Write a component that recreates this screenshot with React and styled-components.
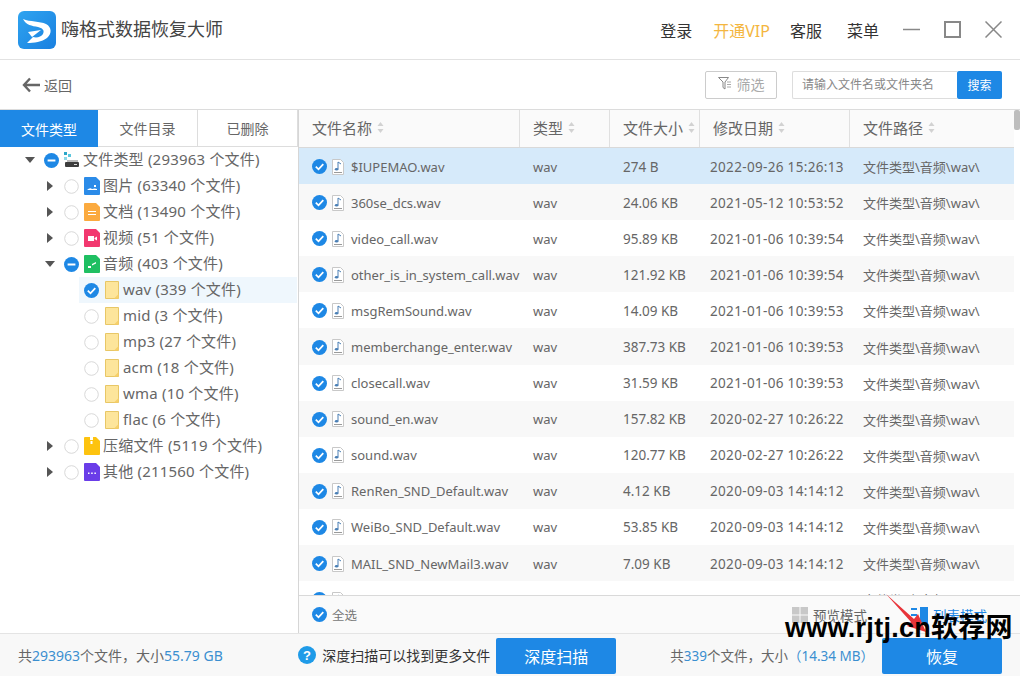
import React from 'react';
import styled, { createGlobalStyle } from 'styled-components';

const Global = createGlobalStyle`
  html, body { margin: 0; padding: 0; background: #fff; }
  * { box-sizing: border-box; }
  body { font-family: "Noto Sans", "Noto Sans CJK SC", sans-serif; color: #666; }
`;

const Page = styled.div`
  position: relative;
  width: 1020px;
  height: 676px;
  display: flex;
  flex-direction: column;
  overflow: hidden;
`;

const Header = styled.header`
  height: 60px;
  flex: none;
  display: flex;
  align-items: center;
  padding-left: 18px;
  border-bottom: 1px solid #e2e2e2;
`;

const Title = styled.h1`
  margin: 0 0 0 5px;
  padding-bottom: 4px;
  font-size: 18px;
  font-weight: 400;
  color: #444;
`;

const Nav = styled.nav`
  margin-left: auto;
  display: flex;
  align-items: center;
  font-size: 16px;
  color: #333;
`;

const NavItem = styled.a`
  margin-left: ${p => p.$gap}px;
  color: ${p => (p.$vip ? '#f4b63f' : '#333')};
  white-space: nowrap;
`;

const WinControls = styled.div`
  display: flex;
  align-items: center;
  gap: 24px;
  margin: 0 18px 0 24px;
`;

const Toolbar = styled.div`
  height: 50px;
  flex: none;
  display: flex;
  align-items: center;
  padding: 0 18px 0 22px;
  border-bottom: 1px solid #dcdcdc;
`;

const Back = styled.a`
  display: flex;
  align-items: center;
  gap: 4px;
  font-size: 14px;
  color: #666;
`;

const FilterButton = styled.button`
  margin-left: auto;
  width: 72px;
  height: 28px;
  padding: 0 0 2px;
  display: flex;
  align-items: center;
  justify-content: center;
  gap: 5px;
  background: #fff;
  border: 1px solid #ccc;
  border-radius: 2px;
  font: inherit;
  font-size: 14px;
  color: #aaa;
`;

const SearchBox = styled.div`
  margin-left: 15px;
  display: flex;
  height: 28px;
`;

const SearchInput = styled.input`
  width: 165px;
  height: 28px;
  padding: 0 9px;
  border: 1px solid #ddd;
  border-right: 0;
  border-radius: 2px 0 0 2px;
  outline: none;
  font: inherit;
  font-size: 12px;
  &::placeholder { color: #888; opacity: 1; }
`;

const SearchButton = styled.button`
  width: 45px;
  height: 28px;
  border: 0;
  border-radius: 2px;
  background: #1e88e5;
  color: #fff;
  font: inherit;
  font-size: 12px;
  padding: 0;
`;

const Main = styled.div`
  flex: 1;
  min-height: 0;
  display: flex;
`;

const Side = styled.aside`
  width: 299px;
  flex: none;
  border-right: 1px solid #d6d6d6;
`;

const Tabs = styled.div`
  display: flex;
  height: 37px;
  width: 298px;
  border-bottom: 1px solid #ddd;
`;

const Tab = styled.div`
  flex: 0 0 ${p => p.$w}px;
  height: ${p => (p.$active ? 37 : 36)}px;
  display: flex;
  align-items: center;
  justify-content: center;
  font-size: 14px;
  color: ${p => (p.$active ? '#fff' : '#666')};
  background: ${p => (p.$active ? '#1e88e5' : '#fff')};
  border-right: ${p => (p.$active ? '0' : '1px solid #ddd')};
`;

const TreeRow = styled.div`
  height: 26px;
  display: flex;
  align-items: center;
  padding-left: ${p => [23, 43, 5][p.$depth]}px;
  margin-left: ${p => (p.$depth === 2 ? 79 : 0)}px;
  width: ${p => (p.$depth === 2 ? '218px' : 'auto')};
  font-size: 15px;
  letter-spacing: 0.2px;
  color: #666;
  white-space: nowrap;
  background: ${p => (p.$selected ? '#eff7fd' : 'transparent')};
`;

const Arrow = styled.span`
  width: 14px;
  height: 14px;
  flex: none;
  margin-right: 7px;
  display: flex;
  align-items: center;
  justify-content: center;
`;

const IconSlot = styled.span`
  display: flex;
  flex: none;
  margin-left: ${p => (p.$depth === 2 ? 6 : 5)}px;
`;

const TreeLabel = styled.span`
  margin-left: ${p => (p.$depth === 1 ? 3 : 4)}px;
  padding-bottom: 4px;
`;

const Content = styled.section`
  flex: 1;
  min-width: 0;
  display: flex;
  flex-direction: column;
`;

const TableWrap = styled.div`
  flex: 1;
  min-height: 0;
  display: flex;
  overflow: hidden;
`;

const Table = styled.div`
  width: 715px;
  flex: none;
`;

const Scrollbar = styled.div`
  flex: 1;
  background: #fff;
`;

const Thumb = styled.div`
  width: 6px;
  height: 20px;
  margin-left: auto;
  background: #bdbdbd;
  border-radius: 2px;
`;

const columns = '221px 90px 90px 150px 164px';

const HeadRow = styled.div`
  display: grid;
  grid-template-columns: ${columns};
  height: 38px;
  background: #fafafa;
  border-bottom: 1px solid #d9d9d9;
`;

const HeadCell = styled.div`
  display: flex;
  align-items: center;
  gap: 5px;
  padding: 0 0 2px 13px;
  font-size: 15px;
  color: #666;
  border-right: ${p => (p.$last ? '0' : '1px solid #e0e0e0')};
`;

const Row = styled.div`
  display: grid;
  grid-template-columns: ${columns};
  height: 36.1px;
  background: ${p => (p.$selected ? '#d6eafa' : p.$odd ? '#f8f8f8' : '#fff')};
`;

const Cell = styled.div`
  display: flex;
  align-items: center;
  padding: 1px 0 0 13px;
  font-size: 13px;
  color: #666;
  white-space: nowrap;
`;

const NameCell = styled(Cell)`
  gap: 4px;
  svg { flex: none; }
`;

const FileName = styled.span`
  margin-left: 2px;
`;

const SizeCell = styled(Cell)`
  font-size: 13.5px;
`;

const DateCell = styled(Cell)`
  padding-left: 10px;
  font-size: 13.5px;
  letter-spacing: 0.33px;
`;

const ListBar = styled.div`
  height: 38px;
  flex: none;
  display: flex;
  align-items: center;
  padding: 0 33px 0 13px;
  border-top: 1px solid #d9d9d9;
  background: #fafafa;
  font-size: 12.5px;
`;

const SelectAll = styled.label`
  display: flex;
  align-items: center;
  gap: 5px;
  color: #777;
`;

const Mode = styled.a`
  display: flex;
  align-items: center;
  gap: 5px;
  font-size: 13.5px;
  color: ${p => (p.$active ? '#1e88e5' : '#666')};
  margin-left: ${p => (p.$first ? 'auto' : '44px')};
`;

const BottomBar = styled.footer`
  height: 43px;
  flex: none;
  display: flex;
  align-items: center;
  padding: 0 18px;
  background: #f8f8f8;
  border-top: 1px solid #e4e4e4;
  font-size: 14px;
  color: #666;
`;

const Num = styled.span`
  color: #3b8fd0;
`;

const Help = styled.div`
  margin-left: auto;
  display: flex;
  align-items: center;
  gap: 6px;
  color: #333;
  font-size: 14px;
`;

const BigButton = styled.button`
  width: 120px;
  height: 36px;
  margin: 2px 0 0 ${p => p.$gap}px;
  border: 0;
  border-radius: 2px;
  background: #1e88e5;
  color: #fff;
  font: inherit;
  font-size: 16px;
`;

const Summary = styled.div`
  margin-left: 54px;
  font-size: 13.5px;
  white-space: nowrap;
`;

const Watermark = styled.div`
  position: absolute;
  left: 785px;
  top: 610px;
  font-family: "Liberation Sans", "Noto Sans CJK SC", sans-serif;
  font-weight: 700;
  font-size: 27px;
  letter-spacing: 0.27px;
  line-height: 36px;
  color: #000;
  white-space: nowrap;
`;

const RedArrow = styled.svg`
  position: absolute;
  left: 884px;
  top: 592px;
`;

const Logo = () => (
  <svg width="38" height="38" viewBox="0 0 38 38">
    <defs>
      <linearGradient id="lg" x1="0" y1="0" x2="1" y2="1">
        <stop offset="0" stopColor="#2fa4f0" />
        <stop offset="1" stopColor="#1a80e0" />
      </linearGradient>
    </defs>
    <rect width="38" height="38" rx="6" fill="url(#lg)" />
    <path d="M5 8 C12 11 22 10 28 13 C34 16 34 23 29 27 C24 31 16 32 9 32 L15 26 C19 27 23 26 25 23 C27 19 24 17 20 16 C14 15 8 14 5 8 Z" fill="#fff" />
    <path d="M10 21 L23 19 L14 26 Z" fill="#fff" />
  </svg>
);

const CheckIcon = ({ state }) => {
  if (state === 'off') {
    return (
      <svg width="15" height="15" viewBox="0 0 15 15">
        <circle cx="7.5" cy="7.5" r="6.8" fill="#fff" stroke="#d8d8d8" />
      </svg>
    );
  }
  return (
    <svg width="15" height="15" viewBox="0 0 15 15">
      <circle cx="7.5" cy="7.5" r="7.5" fill="#1e88e5" />
      {state === 'on'
        ? <path d="M3.8 7.7 L6.5 10.3 L11.3 5.2" fill="none" stroke="#fff" strokeWidth="1.8" />
        : <rect x="3.6" y="6.5" width="7.8" height="2" fill="#fff" />}
    </svg>
  );
};

const TreeArrow = ({ open }) => (
  <svg width="12" height="12" viewBox="0 0 12 12">
    {open ? <path d="M1 3 H11 L6 9 Z" fill="#555" /> : <path d="M3 1 L9 6 L3 11 Z" fill="#555" />}
  </svg>
);

const DocIcon = ({ color, children }) => (
  <svg width="16" height="18" viewBox="0 0 16 18">
    <path d="M0 1 Q0 0 1 0 H12 L16 4 V17 Q16 18 15 18 H1 Q0 18 0 17 Z" fill={color} />
    {children}
  </svg>
);

const icons = {
  image: <DocIcon color="#2b8be8"><path d="M3 13 Q6 10 8 12 Q11 11 13 12 V13 Z M10 8 H12 V10 H10 Z" fill="#fff" /></DocIcon>,
  doc: <DocIcon color="#fbaa3f"><path d="M4 8 H12 V9 H4 Z M4 11 H12 V12 H4 Z" fill="#fff" /></DocIcon>,
  video: <DocIcon color="#f2386f"><path d="M4 7 H10 V12 H4 Z M10.5 9 L13 7.5 V11.5 L10.5 10 Z" fill="#fff" /></DocIcon>,
  audio: <DocIcon color="#1fbf62"><path d="M4 13 H7 V11 H4 Z M8 9 L12 7 V8.5 L8 10.5 Z" fill="#fff" /></DocIcon>,
  zip: <DocIcon color="#fdc30f"><path d="M6 0 H9 V3 H6 Z M6.5 4 H8.5 V7 H6.5 Z" fill="#fff" /></DocIcon>,
  other: <DocIcon color="#6a3de8"><path d="M4 9.5 H5.5 V11 H4 Z M7.2 9.5 H8.7 V11 H7.2 Z M10.4 9.5 H11.9 V11 H10.4 Z" fill="#fff" /></DocIcon>,
};

const DriveIcon = () => (
  <svg width="15" height="16" viewBox="0 0 15 16">
    <rect x="0" y="0" width="3" height="3" fill="#2aa7c9" />
    <rect x="4" y="2" width="3" height="3" fill="#5cc6dd" />
    <rect x="0" y="5" width="3" height="3" fill="#8ed8e8" />
    <rect x="3" y="8" width="11" height="2" fill="#bbb" />
    <rect x="1" y="10" width="14" height="5" rx="1" fill="#3d3d3d" />
    <rect x="10" y="12" width="3" height="1" fill="#ddd" />
  </svg>
);

const FolderIcon = () => (
  <svg width="14" height="18" viewBox="0 0 14 18">
    <path d="M.5 .5 H13.5 V17.5 H.5 Z" fill="#fde59b" stroke="#e8c766" />
    <path d="M9 17.5 L13.5 13 V17.5 Z" fill="#f7d06a" />
  </svg>
);

const AudioFile = () => (
  <svg width="14" height="16" viewBox="0 0 14 16">
    <path d="M1.5 .5 H9.5 L12.5 3.5 V15.5 H1.5 Z" fill="#fff" stroke="#c8c8c8" />
    <path d="M7 3 V10 M7 3 L10 5" fill="none" stroke="#4a7fb5" strokeWidth="1" />
    <ellipse cx="5.6" cy="10.2" rx="1.8" ry="1.3" fill="#4a7fb5" />
    <rect x="3" y="13" width="8" height="1" fill="#9a9a9a" />
  </svg>
);

const SortIcon = () => (
  <svg width="7" height="13" viewBox="0 0 7 13">
    <path d="M3.5 1 L6.5 5 H.5 Z M3.5 12 L6.5 8 H.5 Z" fill="#d2d2d2" />
  </svg>
);

const BackIcon = () => (
  <svg width="18" height="16" viewBox="0 0 18 16">
    <path d="M8 1.5 L2 8 L8 14.5 M2 8 H18" fill="none" stroke="#666" strokeWidth="2.4" />
  </svg>
);

const FilterIcon = () => (
  <svg width="14" height="13" viewBox="0 0 14 13">
    <path d="M.5 .5 H10.5 L7 5 V12 L5 10.5 V5 Z" fill="none" stroke="#888" />
    <path d="M9 5 H13 M9 7.5 H13 M9 10 H13" stroke="#aaa" />
  </svg>
);

const GridIcon = () => (
  <svg width="16" height="16" viewBox="0 0 16 16">
    <path d="M0 0 H7.5 V7.5 H0 Z M8.5 0 H16 V7.5 H8.5 Z M0 8.5 H7.5 V16 H0 Z M8.5 8.5 H16 V16 H8.5 Z" fill="#c8c8c8" />
  </svg>
);

const ListIcon = () => (
  <svg width="17" height="16" viewBox="0 0 17 16">
    <path d="M0 1 H6 V3 H0 Z M0 7 H6 V9 H0 Z M0 13 H6 V15 H0 Z" fill="#1e88e5" />
    <rect x="9" y="0" width="8" height="16" fill="#1e88e5" />
  </svg>
);

const HelpIcon = () => (
  <svg width="18" height="18" viewBox="0 0 18 18">
    <circle cx="9" cy="9" r="9" fill="#1f9be8" />
    <text x="9" y="13.5" textAnchor="middle" fontSize="13" fontWeight="700" fill="#fff" fontFamily="Liberation Sans">?</text>
  </svg>
);

const tree = [
  { depth: 0, arrow: 'open', check: 'part', icon: <DriveIcon />, label: '文件类型 (293963 个文件)' },
  { depth: 1, arrow: 'closed', check: 'off', icon: icons.image, label: '图片 (63340 个文件)' },
  { depth: 1, arrow: 'closed', check: 'off', icon: icons.doc, label: '文档 (13490 个文件)' },
  { depth: 1, arrow: 'closed', check: 'off', icon: icons.video, label: '视频 (51 个文件)' },
  { depth: 1, arrow: 'open', check: 'part', icon: icons.audio, label: '音频 (403 个文件)' },
  { depth: 2, check: 'on', icon: <FolderIcon />, selected: true, label: 'wav (339 个文件)' },
  { depth: 2, check: 'off', icon: <FolderIcon />, label: 'mid (3 个文件)' },
  { depth: 2, check: 'off', icon: <FolderIcon />, label: 'mp3 (27 个文件)' },
  { depth: 2, check: 'off', icon: <FolderIcon />, label: 'acm (18 个文件)' },
  { depth: 2, check: 'off', icon: <FolderIcon />, label: 'wma (10 个文件)' },
  { depth: 2, check: 'off', icon: <FolderIcon />, label: 'flac (6 个文件)' },
  { depth: 1, arrow: 'closed', check: 'off', icon: icons.zip, label: '压缩文件 (5119 个文件)' },
  { depth: 1, arrow: 'closed', check: 'off', icon: icons.other, label: '其他 (211560 个文件)' },
];

const files = [
  ['$IUPEMAO.wav', 'wav', '274 B', '2022-09-26 15:26:13'],
  ['360se_dcs.wav', 'wav', '24.06 KB', '2021-05-12 10:53:52'],
  ['video_call.wav', 'wav', '95.89 KB', '2021-01-06 10:39:54'],
  ['other_is_in_system_call.wav', 'wav', '121.92 KB', '2021-01-06 10:39:54'],
  ['msgRemSound.wav', 'wav', '14.09 KB', '2021-01-06 10:39:53'],
  ['memberchange_enter.wav', 'wav', '387.73 KB', '2021-01-06 10:39:53'],
  ['closecall.wav', 'wav', '31.59 KB', '2021-01-06 10:39:53'],
  ['sound_en.wav', 'wav', '157.82 KB', '2020-02-27 10:26:22'],
  ['sound.wav', 'wav', '120.77 KB', '2020-02-27 10:26:22'],
  ['RenRen_SND_Default.wav', 'wav', '4.12 KB', '2020-09-03 14:14:12'],
  ['WeiBo_SND_Default.wav', 'wav', '53.85 KB', '2020-09-03 14:14:12'],
  ['MAIL_SND_NewMail3.wav', 'wav', '7.09 KB', '2020-09-03 14:14:12'],
  ['MAIL_SND_NewMail2.wav', '', '', ''],
];

const heads = ['文件名称', '类型', '文件大小', '修改日期', '文件路径'];

export default function App() {
  return (
    <Page>
      <Global />
      <Header>
        <Logo />
        <Title>嗨格式数据恢复大师</Title>
        <Nav>
          <NavItem>登录</NavItem>
          <NavItem $gap={21} $vip>开通VIP</NavItem>
          <NavItem $gap={20}>客服</NavItem>
          <NavItem $gap={25}>菜单</NavItem>
          <WinControls>
            <svg width="17" height="17" viewBox="0 0 17 17"><path d="M0 8.5 H17" stroke="#888" strokeWidth="1.5" /></svg>
            <svg width="17" height="17" viewBox="0 0 17 17"><rect x="1" y="1" width="15" height="15" fill="none" stroke="#888" strokeWidth="2" /></svg>
            <svg width="17" height="17" viewBox="0 0 17 17"><path d="M.5 .5 L16.5 16.5 M16.5 .5 L.5 16.5" stroke="#888" strokeWidth="1.5" /></svg>
          </WinControls>
        </Nav>
      </Header>
      <Toolbar>
        <Back><BackIcon />返回</Back>
        <FilterButton><FilterIcon />筛选</FilterButton>
        <SearchBox>
          <SearchInput placeholder="请输入文件名或文件夹名" />
          <SearchButton>搜索</SearchButton>
        </SearchBox>
      </Toolbar>
      <Main>
        <Side>
          <Tabs>
            <Tab $active $w={98}>文件类型</Tab>
            <Tab $w={100}>文件目录</Tab>
            <Tab $w={100}>已删除</Tab>
          </Tabs>
          {tree.map(item => (
            <TreeRow key={item.label} $depth={item.depth} $selected={item.selected}>
              {item.arrow && <Arrow><TreeArrow open={item.arrow === 'open'} /></Arrow>}
              <CheckIcon state={item.check} />
              <IconSlot $depth={item.depth}>{item.icon}</IconSlot>
              <TreeLabel $depth={item.depth}>{item.label}</TreeLabel>
            </TreeRow>
          ))}
        </Side>
        <Content>
          <TableWrap>
            <Table>
              <HeadRow>
                {heads.map((h, i) => (
                  <HeadCell key={h} $last={i === heads.length - 1}>{h}<SortIcon /></HeadCell>
                ))}
              </HeadRow>
              {files.map(([name, type, size, date], i) => (
                <Row key={name} $selected={i === 0} $odd={i % 2 === 1}>
                  <NameCell>
                    <CheckIcon state="on" />
                    <AudioFile />
                    <FileName>{name}</FileName>
                  </NameCell>
                  <Cell>{type}</Cell>
                  <SizeCell>{size}</SizeCell>
                  <DateCell>{date}</DateCell>
                  <Cell>文件类型\音频\wav\</Cell>
                </Row>
              ))}
            </Table>
            <Scrollbar><Thumb /></Scrollbar>
          </TableWrap>
          <ListBar>
            <SelectAll><CheckIcon state="on" />全选</SelectAll>
            <Mode $first><GridIcon />预览模式</Mode>
            <Mode $active><ListIcon />列表模式</Mode>
          </ListBar>
        </Content>
      </Main>
      <BottomBar>
        <span>共<Num>293963</Num>个文件，大小<Num>55.79 GB</Num></span>
        <Help><HelpIcon />深度扫描可以找到更多文件</Help>
        <BigButton $gap={6}>深度扫描</BigButton>
        <Summary>共<Num>339</Num>个文件，大小<Num>（14.34 MB）</Num></Summary>
        <BigButton $gap={8}>恢复</BigButton>
      </BottomBar>
      <RedArrow width="46" height="44" viewBox="0 0 46 44">
        <path d="M2 2 L30 27 L34 22 L42 40 L23 34 L27 30 Z" fill="#e8343a" />
      </RedArrow>
      <Watermark>www.rjtj.cn软荐网</Watermark>
    </Page>
  );
}
